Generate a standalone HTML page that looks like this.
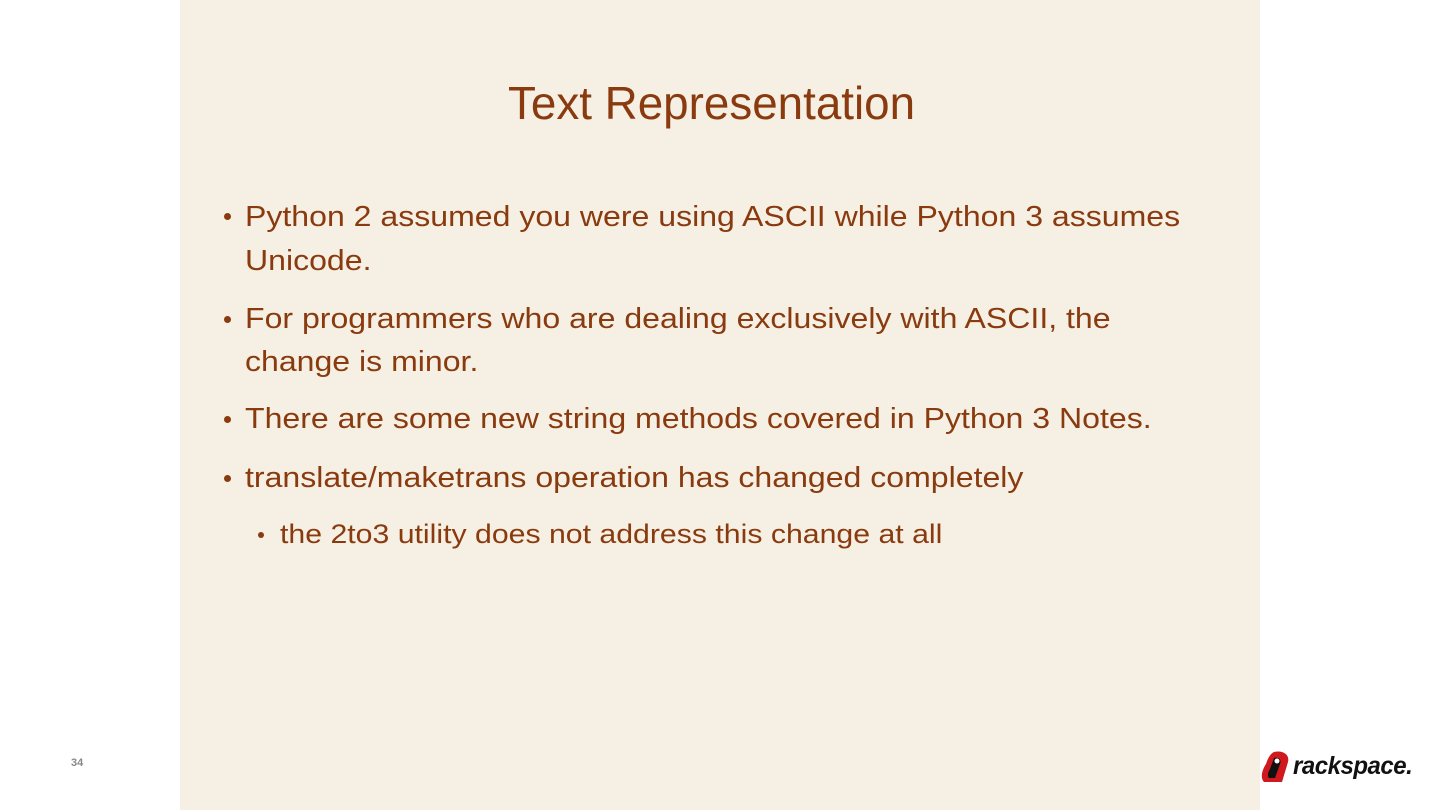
<!DOCTYPE html>
<html><head><style>
body{margin:0;width:1440px;height:810px;background:#fff;position:relative;overflow:hidden;font-family:"Liberation Sans",sans-serif;color:#8a3a0f}
.bg{position:absolute;left:180px;top:0;width:1080px;height:810px;background:#f5f0e3}
.t{position:absolute;white-space:nowrap;transform-origin:left center;line-height:1}
.title{left:508px;top:80px;font-size:46px;transform:scaleX(0.995);color:#8a3a0f}
.l{font-size:29px;transform:scaleX(1.105)}
.s{font-size:27px;transform:scaleX(1.12)}
.b{position:absolute;width:7px;height:7px;border-radius:50%;background:#8a3a0f}
</style></head><body>
<div class="bg"></div>
<div class="t title">Text Representation</div>
<div class="b" style="left:224px;top:213px"></div>
<div class="t l" style="left:245px;top:203px">Python 2 assumed you were using ASCII while Python 3 assumes</div>
<div class="t l" style="left:245px;top:247px">Unicode.</div>
<div class="b" style="left:224px;top:316px"></div>
<div class="t l" style="left:245px;top:305px">For programmers who are dealing exclusively with ASCII, the</div>
<div class="t l" style="left:245px;top:348px">change is minor.</div>
<div class="b" style="left:224px;top:416px"></div>
<div class="t l" style="left:245px;top:405px">There are some new string methods covered in Python 3 Notes.</div>
<div class="b" style="left:224px;top:475px"></div>
<div class="t l" style="left:245px;top:464px">translate/maketrans operation has changed completely</div>
<div class="b" style="left:258px;top:532px;width:6px;height:6px"></div>
<div class="t s" style="left:280px;top:521px">the 2to3 utility does not address this change at all</div>
<div class="t" style="left:71px;top:758px;font-size:11px;font-weight:bold;color:#888">34</div>
<svg style="position:absolute;left:1260px;top:750px" width="32" height="34" viewBox="0 0 32 34">
<path d="M14 2 C22 0 30 4 28 12 L22 32 L4 32 C0 28 2 20 6 14 C8 8 10 4 14 2Z" fill="#d0181f"/>
<path d="M14 8 C18 7 22 9 20 14 L15 28 L9 28 C7 26 8 22 10 19 Z" fill="#111"/>
<circle cx="17" cy="11" r="2.5" fill="#fff"/>
</svg>
<div class="t" style="left:1293px;top:754px;font-size:25px;font-weight:bold;font-style:italic;color:#111;letter-spacing:-0.5px;transform:scaleX(0.96)">rackspace.</div>
</body></html>
